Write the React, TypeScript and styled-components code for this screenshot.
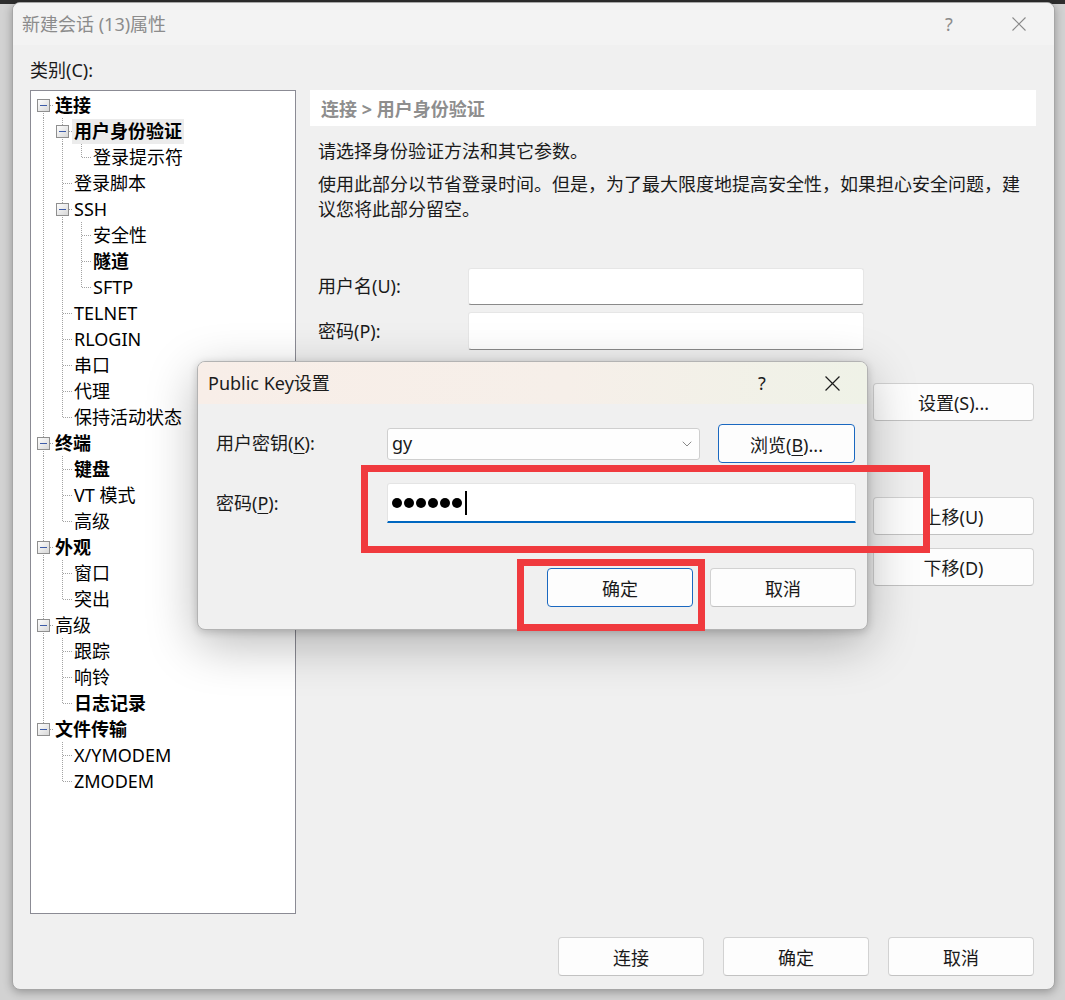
import React from 'react'
import styled, { createGlobalStyle } from 'styled-components'
import { ChevronDown } from 'lucide-react'

const FONT = `"Noto Sans", "Noto Sans CJK SC", sans-serif`

type Node = { label: string; bold?: boolean; selected?: boolean; children?: Node[] }

const tree: Node[] = [
  {
    label: '连接', bold: true, children: [
      { label: '用户身份验证', bold: true, selected: true, children: [{ label: '登录提示符' }] },
      { label: '登录脚本' },
      { label: 'SSH', children: [{ label: '安全性' }, { label: '隧道', bold: true }, { label: 'SFTP' }] },
      { label: 'TELNET' },
      { label: 'RLOGIN' },
      { label: '串口' },
      { label: '代理' },
      { label: '保持活动状态' },
    ],
  },
  { label: '终端', bold: true, children: [{ label: '键盘', bold: true }, { label: 'VT 模式' }, { label: '高级' }] },
  { label: '外观', bold: true, children: [{ label: '窗口' }, { label: '突出' }] },
  { label: '高级', children: [{ label: '跟踪' }, { label: '响铃' }, { label: '日志记录', bold: true }] },
  { label: '文件传输', bold: true, children: [{ label: 'X/YMODEM' }, { label: 'ZMODEM' }] },
]

type Row = { node: Node; level: number; hasNext: boolean; first: boolean; pipes: boolean[] }

const flatten = (nodes: Node[], level = 0, pipes: boolean[] = []): Row[] =>
  nodes.flatMap((node, i) => {
    const hasNext = i < nodes.length - 1
    const row: Row = { node, level, hasNext, first: level === 0 && i === 0, pipes }
    return [row, ...(node.children ? flatten(node.children, level + 1, [...pipes, hasNext]) : [])]
  })

const rows = flatten(tree)

const DOT = { stroke: '#a3a3a3', strokeDasharray: '1 1', shapeRendering: 'crispEdges' as const }

// one 19x26 cell of the tree's connector lines
const TreeGlyph = ({ kind, top = true, down = false }: { kind: 'pipe' | 'blank' | 'leaf' | 'box'; top?: boolean; down?: boolean }) => (
  <svg width="19" height="26" viewBox="0 0 19 26">
    {kind === 'pipe' && <line x1="9.5" y1="0" x2="9.5" y2="26" {...DOT} />}
    {kind === 'leaf' && (
      <>
        <line x1="9.5" y1="0" x2="9.5" y2={down ? 26 : 13} {...DOT} />
        <line x1="10" y1="13.5" x2="19" y2="13.5" {...DOT} />
      </>
    )}
    {kind === 'box' && (
      <>
        <defs>
          <linearGradient id="tvbox" x1="0" y1="0" x2="1" y2="1">
            <stop offset="0" stopColor="#ffffff" />
            <stop offset="1" stopColor="#d6d6d6" />
          </linearGradient>
        </defs>
        {top && <line x1="9.5" y1="0" x2="9.5" y2="8" {...DOT} />}
        {down && <line x1="9.5" y1="19" x2="9.5" y2="26" {...DOT} />}
        <line x1="16" y1="13.5" x2="19" y2="13.5" {...DOT} />
        <rect x="3.5" y="7.5" width="12" height="12" fill="url(#tvbox)" stroke="#8f8f8f" shapeRendering="crispEdges" />
        <line x1="6" y1="13.5" x2="13" y2="13.5" stroke="#3d5ca8" shapeRendering="crispEdges" />
      </>
    )}
  </svg>
)

const CloseIcon = ({ color, size = 14 }: { color: string; size?: number }) => (
  <svg width={size} height={size} viewBox="0 0 14 14">
    <path d="M0.5 0.5 L13.5 13.5 M13.5 0.5 L0.5 13.5" stroke={color} strokeWidth="1.1" fill="none" />
  </svg>
)

const App = () => {
  return (
    <Page>
      <GlobalStyle />
      <MainWindow>
        <TitleBar>
          <TitleText $inactive>新建会话 (13)属性</TitleText>
          <Caption $inactive>?</Caption>
          <Caption $inactive>
            <CloseIcon color="#8a8a8a" />
          </Caption>
        </TitleBar>
        <Body>
          <CategoryLabel>类别(C):</CategoryLabel>
          <Content>
            <Tree>
              {rows.map((r, i) => (
                <TreeRow key={i}>
                  {r.pipes.map((p, k) => (
                    <TreeGlyph key={k} kind={p ? 'pipe' : 'blank'} />
                  ))}
                  <TreeGlyph kind={r.node.children ? 'box' : 'leaf'} top={!r.first} down={r.hasNext} />
                  <TreeLabel $bold={r.node.bold} $selected={r.node.selected}>{r.node.label}</TreeLabel>
                </TreeRow>
              ))}
            </Tree>

            <Panel>
              <PanelHeader>连接 &gt; 用户身份验证</PanelHeader>
              <Paragraph>请选择身份验证方法和其它参数。</Paragraph>
              <Paragraph $gap>使用此部分以节省登录时间。但是，为了最大限度地提高安全性，如果担心安全问题，建议您将此部分留空。</Paragraph>

              <Form>
                <FieldLabel>用户名(U):</FieldLabel>
                <TextBox $h={37} />
                <FieldLabel>密码(P):</FieldLabel>
                <TextBox $h={38} />
              </Form>

              <MethodSection>
                <SideButtons>
                  <Button $w={161} $h={38}>设置(S)...</Button>
                  <Button $w={161} $h={38} $top={76}>上移(U)</Button>
                  <Button $w={161} $h={38} $top={13}>下移(D)</Button>
                </SideButtons>
              </MethodSection>
            </Panel>
          </Content>

          <Footer>
            <Button>连接</Button>
            <Button>确定</Button>
            <Button>取消</Button>
          </Footer>
        </Body>
      </MainWindow>

      <Modal>
        <ModalTitle>
          <TitleText>Public Key设置</TitleText>
          <Caption>?</Caption>
          <Caption>
            <CloseIcon color="#1c1c1c" size={15} />
          </Caption>
        </ModalTitle>
        <ModalBody>
          <ModalLabel>用户密钥(<u>K</u>):</ModalLabel>
          <ModalRow>
            <Select>
              <span>gy</span>
              <ChevronDown size={16} strokeWidth={1.2} color="#6b6b6b" />
            </Select>
            <Button $primary $w={137}>浏览(<u>B</u>)...</Button>
          </ModalRow>
          <ModalLabel>密码(<u>P</u>):</ModalLabel>
          <PasswordBox>
            {Array.from({ length: 6 }).map((_, i) => (
              <Dot key={i} />
            ))}
            <Caret />
          </PasswordBox>
        </ModalBody>
        <ModalFooter>
          <Button $primary>确定</Button>
          <Button>取消</Button>
        </ModalFooter>
      </Modal>

      <Highlight $x={361} $y={465} $w={569} $h={88} />
      <Highlight $x={517} $y={559} $w={188} $h={72} />
    </Page>
  )
}

export default App

const GlobalStyle = createGlobalStyle`
html, body {
  margin: 0;
  padding: 0;
}
body {
  font-family: ${FONT};
  color: #1a1a1a;
  overflow: hidden;
}
* {
  box-sizing: border-box;
}
`

const Page = styled.div`
position: relative;
width: 1065px;
height: 1000px;
overflow: hidden;
padding-top: 2px;
background: linear-gradient(#2d2d2d 0 4px, #d2d2d2 4px);
`

const MainWindow = styled.div`
margin-left: 12px;
width: 1043px;
height: 988px;
display: flex;
flex-direction: column;
background-color: #f0f0f0;
border: 1px solid #a6a6a6;
border-radius: 8px;
overflow: hidden;
box-shadow: 0 2px 10px rgba(0, 0, 0, 0.3);
`

const TitleBar = styled.div`
height: 42px;
flex-shrink: 0;
display: flex;
align-items: center;
padding-left: 9px;
background-color: #f3f3f3;
`

const TitleText = styled.div<{ $inactive?: boolean }>`
flex: 1;
font-size: 18px;
line-height: 24px;
color: ${p => (p.$inactive ? '#8c8c8c' : '#1c1c1c')};
white-space: nowrap;
`

const Caption = styled.div<{ $inactive?: boolean }>`
width: 70px;
height: 100%;
display: flex;
align-items: center;
justify-content: center;
font-size: 18px;
color: ${p => (p.$inactive ? '#8c8c8c' : '#1c1c1c')};
`

const Body = styled.div`
flex: 1;
display: flex;
flex-direction: column;
padding: 0 18px 13px 17px;
`

const CategoryLabel = styled.div`
margin-top: 12.5px;
font-size: 18px;
line-height: 25px;
`

const Content = styled.div`
margin-top: 7.5px;
height: 824px;
display: grid;
grid-template-columns: 266px 1fr;
column-gap: 14px;
`

const Tree = styled.div`
background-color: #ffffff;
border: 1px solid #8b8b94;
padding: 1px 0 0 3px;
overflow: hidden;
`

const TreeRow = styled.div`
display: flex;
align-items: center;
height: 26px;
svg {
  flex-shrink: 0;
}
`

const TreeLabel = styled.span<{ $bold?: boolean; $selected?: boolean }>`
padding: 0 2px;
font-size: 18px;
line-height: 25px;
color: #000000;
white-space: nowrap;
font-weight: ${p => (p.$bold ? 700 : 400)};
background-color: ${p => (p.$selected ? '#ececec' : 'transparent')};
`

const Panel = styled.div`
display: flex;
flex-direction: column;
`

const PanelHeader = styled.div`
height: 36px;
display: flex;
align-items: center;
padding-left: 11px;
background-color: #ffffff;
font-size: 18px;
font-weight: 700;
color: #8e8e8e;
`

const Paragraph = styled.p<{ $gap?: boolean }>`
margin: ${p => (p.$gap ? '8px' : '12.5px')} 0 0;
padding-left: 8px;
max-width: 714px;
font-size: 18px;
line-height: 25px;
`

const Form = styled.div`
margin-top: 46.5px;
padding-left: 8px;
display: grid;
grid-template-columns: 150px 396px;
row-gap: 7px;
align-items: center;
`

const FieldLabel = styled.div`
font-size: 18px;
line-height: 25px;
`

const TextBox = styled.div<{ $h: number }>`
height: ${p => p.$h}px;
background-color: #ffffff;
border: 1px solid #e6e6e6;
border-bottom-color: #8a8a8a;
border-radius: 3px;
`

const MethodSection = styled.div`
margin-top: 33px;
padding-right: 2px;
display: flex;
justify-content: flex-end;
`

const SideButtons = styled.div`
display: flex;
flex-direction: column;
`

const Button = styled.button<{ $primary?: boolean; $w?: number; $h?: number; $top?: number }>`
width: ${p => p.$w ?? 146}px;
height: ${p => p.$h ?? 39}px;
margin-top: ${p => p.$top ?? 0}px;
padding: 0;
font-family: ${FONT};
font-size: 18px;
color: #1a1a1a;
background-color: #fdfdfd;
border: 1px solid ${p => (p.$primary ? '#1a68c0' : '#d2d2d2')};
border-bottom-color: ${p => (p.$primary ? '#1a68c0' : '#c2c2c2')};
border-radius: 4px;
u {
  text-underline-offset: 3px;
}
`

const Footer = styled.div`
margin-top: 23px;
padding-right: 2px;
display: flex;
justify-content: flex-end;
gap: 19px;
`

const Modal = styled.div`
position: absolute;
left: 197px;
top: 361px;
width: 671px;
height: 269px;
display: flex;
flex-direction: column;
background-color: #f0f0f0;
border: 1px solid #b3b3b3;
border-radius: 8px;
overflow: hidden;
box-shadow: 0 14px 50px rgba(0, 0, 0, 0.28), 0 2px 8px rgba(0, 0, 0, 0.18);
`

const ModalTitle = styled.div`
height: 42px;
flex-shrink: 0;
display: flex;
align-items: center;
padding-left: 10px;
background: linear-gradient(90deg, #f8eee8 0%, #f6efe9 55%, #eff2e7 100%);
`

const ModalBody = styled.div`
padding: 20px 11px 0 18px;
display: grid;
grid-template-columns: 171px 1fr;
row-gap: 20px;
align-items: center;
`

const ModalLabel = styled.div`
font-size: 18px;
line-height: 25px;
u {
  text-underline-offset: 3px;
}
`

const ModalRow = styled.div`
display: flex;
align-items: center;
gap: 18px;
`

const Select = styled.div`
width: 313px;
height: 32px;
display: flex;
align-items: center;
justify-content: space-between;
padding: 0 4px 0 4px;
background-color: #fefefe;
border: 1px solid #cfcfcf;
border-radius: 3px;
font-size: 18px;
span {
  line-height: 25px;
}
`

const PasswordBox = styled.div`
width: 469px;
height: 40px;
display: flex;
align-items: center;
padding-left: 4px;
background-color: #ffffff;
border: 1px solid #e4e4e4;
border-bottom: 2px solid #0067c0;
border-radius: 3px 3px 0 0;
`

const Dot = styled.span`
width: 10px;
height: 10px;
margin-right: 2px;
border-radius: 50%;
background-color: #000000;
`

const Caret = styled.span`
width: 2px;
height: 24px;
margin-left: 1px;
background-color: #000000;
`

const ModalFooter = styled.div`
margin-top: 45px;
padding-right: 11px;
display: flex;
justify-content: flex-end;
gap: 17px;
`

const Highlight = styled.div<{ $x: number; $y: number; $w: number; $h: number }>`
position: absolute;
left: ${p => p.$x}px;
top: ${p => p.$y}px;
width: ${p => p.$w}px;
height: ${p => p.$h}px;
border: 7px solid #f03a3e;
`
